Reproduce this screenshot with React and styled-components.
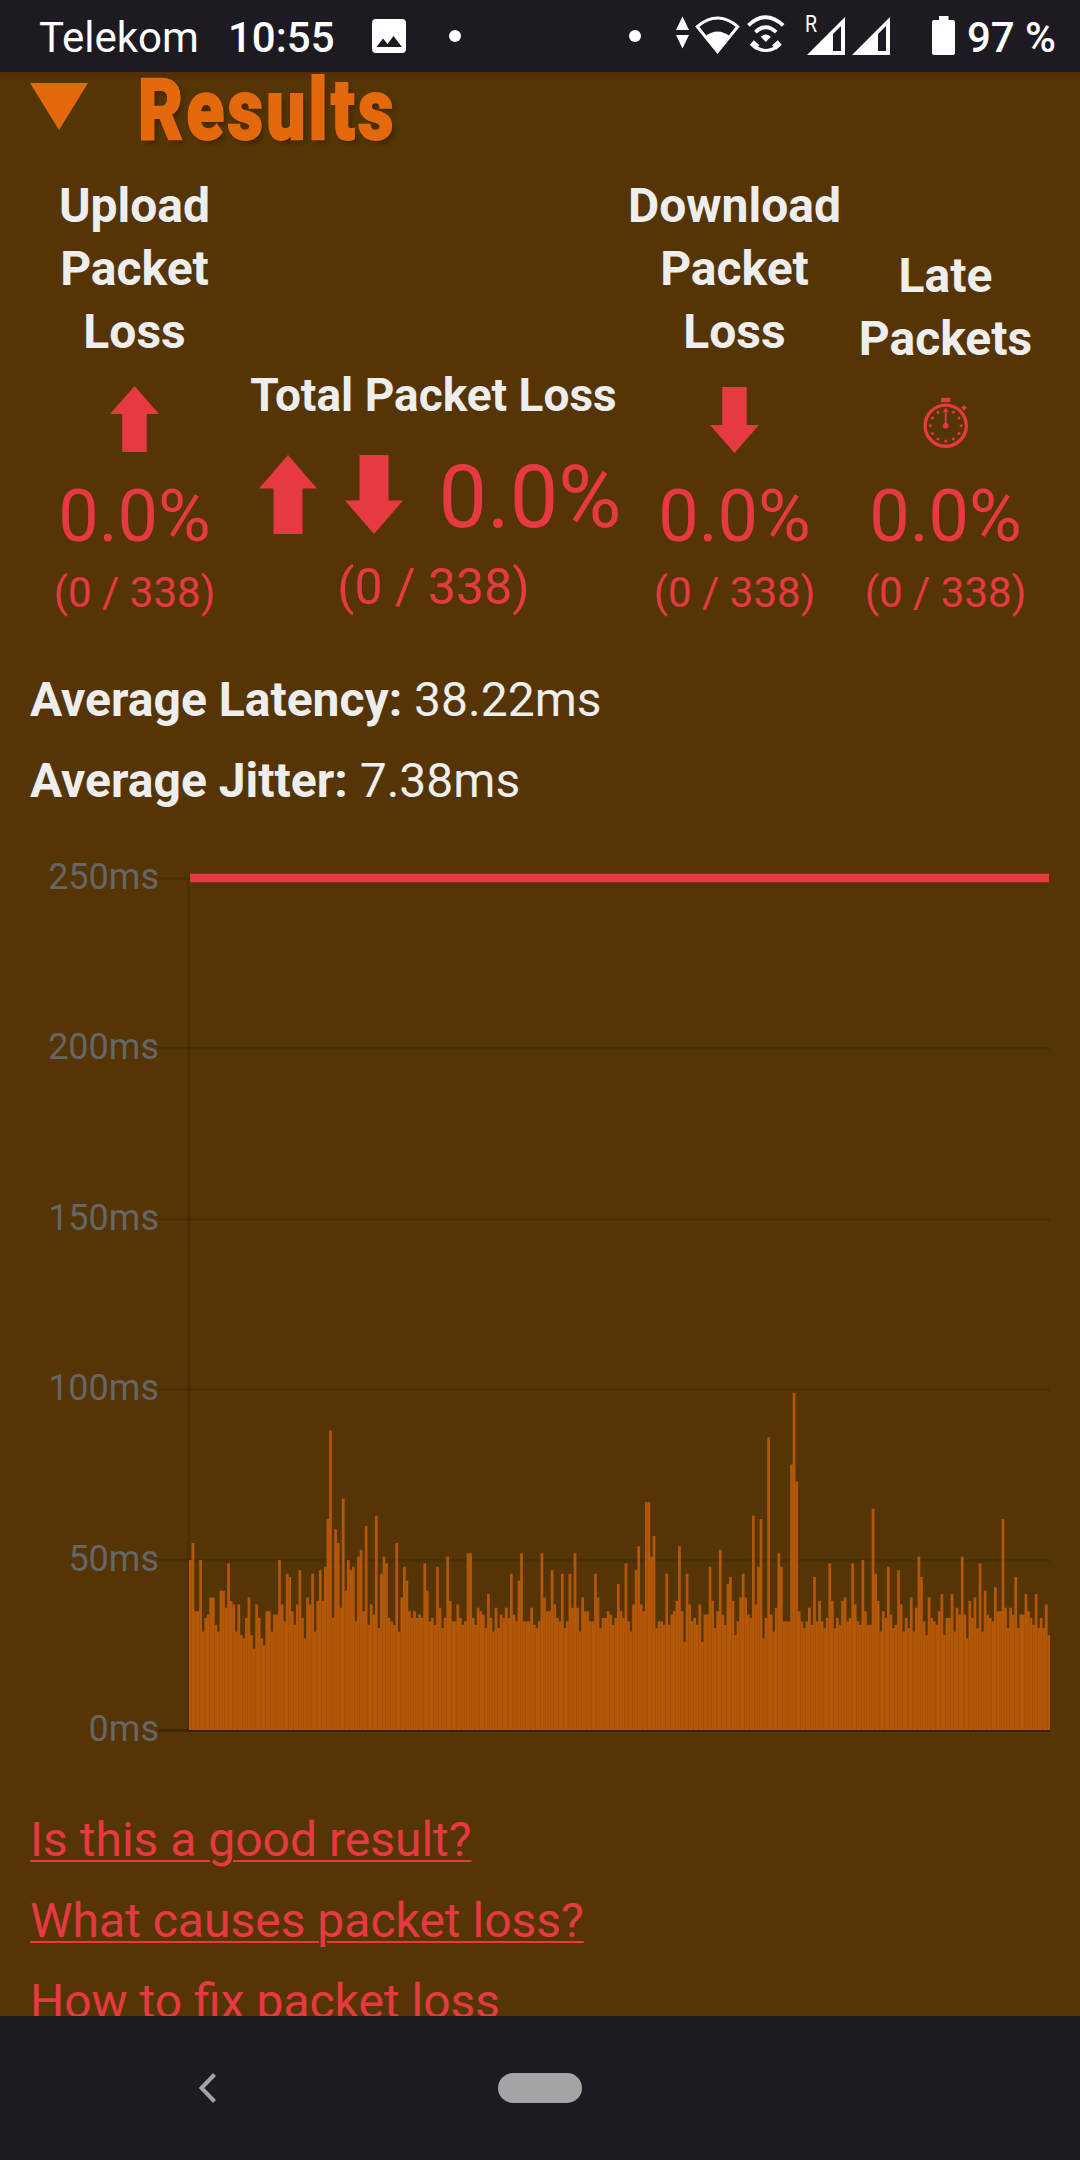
import React from 'react'
import styled, { createGlobalStyle } from 'styled-components'

const GlobalStyle = createGlobalStyle`
  body {
    margin: 0;
    background-color: #553506;
    font-family: Roboto, sans-serif;
  }
`

const Screen = styled.div`
  width: 1080px;
  height: 2160px;
  display: flex;
  flex-direction: column;
  overflow: hidden;
`

const StatusBar = styled.div`
  height: 72px;
  flex: none;
  display: flex;
  justify-content: space-between;
  background-color: #1d1b21;
  color: #fff;
  font-size: 42px;
  line-height: 75px;
`

const StatusLeft = styled.div`
  display: flex;
  padding-left: 39px;
`

const StatusRight = styled.div`
  display: flex;
  padding-right: 24px;
`

const Carrier = styled.span`
  width: 189px;
`

const Clock = styled.span`
  width: 144px;
  font-weight: 500;
`

const Battery = styled.span`
  margin-left: 12px;
  font-weight: 500;
  white-space: nowrap;
`

const Dot = styled.span`
  width: 12px;
  height: 12px;
  margin: 30px 0 0 ${(p) => p.$left || 0}px;
  border-radius: 50%;
  background-color: #fff;
`

const StatusIcon = styled.svg`
  flex: none;
  display: block;
  margin-top: ${(p) => p.$top}px;
  margin-left: ${(p) => p.$left || 0}px;
`

const Roaming = styled.span`
  width: 11px;
  margin: 14px 0 0 20px;
  font-size: 23px;
  line-height: 21px;
  transform: scaleX(0.85);
  transform-origin: left;
`

const Content = styled.main`
  height: 1944px;
  flex: none;
  overflow: hidden;
  color: #eee;
  background: linear-gradient(#512d09, #553506 10px);
`

const Header = styled.div`
  display: flex;
  height: 76px;
  padding-left: 30px;
`

const Triangle = styled.div`
  width: 0;
  height: 0;
  margin-top: 11px;
  border-left: 29.5px solid transparent;
  border-right: 29.5px solid transparent;
  border-top: 47px solid #e4690c;
`

const Title = styled.h2`
  margin: 0 0 0 50px;
  color: #e4690c;
  font-size: 85px;
  font-weight: 900;
  line-height: 76px;
  letter-spacing: 4px;
  -webkit-text-stroke: 2px #e4690c;
  text-shadow: 4px 4px 5px rgba(0, 0, 0, 0.25);
  transform: scaleX(0.815);
  transform-origin: left;
`

const Stats = styled.div`
  display: grid;
  grid-template-columns: 209px 389px 213px 209px;
  align-items: end;
  height: 475px;
  padding-left: 30px;
`

const Stat = styled.div`
  display: flex;
  flex-direction: column;
  align-items: center;
  text-align: center;
  padding-bottom: ${(p) => (p.$total ? 6 : 0)}px;
`

const StatLabel = styled.div`
  font-size: ${(p) => (p.$total ? 46 : 48)}px;
  font-weight: 700;
  line-height: ${(p) => (p.$total ? 60 : 63)}px;
  white-space: pre;
`

const StatIcon = styled.svg`
  display: block;
  margin: ${(p) => p.$margin};
`

const TotalRow = styled.div`
  display: flex;
  align-items: flex-start;
  height: 100px;
  margin: 23px 0 9px;
  padding-left: 14px;
`

const Percent = styled.div`
  color: #e63941;
  font-size: ${(p) => (p.$total ? 86.4 : 72)}px;
  line-height: ${(p) => (p.$total ? 100 : 84)}px;
`

const Count = styled.div`
  color: #e63941;
  font-size: ${(p) => (p.$total ? 50 : 42)}px;
  line-height: 60px;
  margin-top: ${(p) => (p.$total ? 0 : 4)}px;
`

const Averages = styled.div`
  padding: 36px 30px 0;
`

const Average = styled.div`
  font-size: 48px;
  line-height: 81px;
`

const ChartSvg = styled.svg`
  display: block;
`

const AxisLabel = styled.text`
  fill: #666;
  font-size: 36px;
  text-anchor: end;
`

const Links = styled.div`
  display: flex;
  flex-direction: column;
  align-items: flex-start;
  padding-left: 30px;
`

const Link = styled.a`
  color: #e63941;
  font-size: 48px;
  line-height: 81px;
  text-decoration: underline;
  text-decoration-thickness: 2px;
  text-underline-offset: 4px;
`

const NavBar = styled.nav`
  display: flex;
  align-items: center;
  height: 144px;
  flex: none;
  padding-left: 199px;
  background-color: #1d1b21;
`

const HomePill = styled.div`
  width: 84px;
  height: 30px;
  margin-left: 282px;
  border-radius: 15px;
  background-color: #a4a3a6;
`

// latency of every packet, in ms
const latencies = [
  50, 55, 35, 35, 50, 29, 33, 34, 39, 39, 31, 29, 41, 41, 36, 49, 38, 37, 29, 37,
  28, 27, 33, 39, 28, 24, 37, 33, 27, 25, 35, 35, 29, 34, 34, 50, 37, 32, 46, 45,
  35, 31, 37, 47, 33, 27, 39, 37, 46, 29, 38, 47, 38, 48, 62, 88, 33, 59, 55, 36,
  68, 41, 50, 47, 48, 32, 51, 53, 35, 60, 31, 37, 34, 63, 30, 46, 51, 49, 33, 32,
  31, 55, 29, 39, 48, 44, 35, 33, 35, 33, 34, 33, 49, 41, 32, 33, 31, 48, 36, 30,
  33, 51, 38, 32, 32, 37, 33, 31, 32, 52, 52, 33, 31, 36, 35, 34, 30, 40, 33, 29,
  36, 30, 34, 33, 36, 33, 46, 34, 32, 44, 52, 32, 32, 32, 36, 31, 30, 32, 52, 39,
  35, 35, 47, 37, 33, 32, 46, 30, 32, 46, 36, 52, 36, 29, 39, 35, 35, 32, 32, 46,
  39, 30, 33, 33, 35, 34, 31, 33, 43, 35, 33, 49, 32, 29, 37, 47, 54, 37, 35, 67,
  67, 51, 57, 30, 32, 32, 31, 46, 31, 34, 35, 38, 54, 35, 26, 46, 37, 32, 33, 31,
  37, 26, 34, 34, 48, 38, 30, 35, 53, 34, 31, 43, 45, 38, 28, 32, 39, 46, 39, 34,
  33, 63, 37, 48, 62, 27, 33, 86, 34, 29, 36, 52, 48, 32, 32, 32, 78, 99, 73, 35,
  32, 30, 32, 36, 31, 45, 32, 38, 32, 30, 33, 49, 38, 30, 33, 31, 38, 39, 32, 33,
  49, 37, 32, 31, 50, 35, 31, 31, 65, 46, 38, 29, 35, 33, 48, 34, 30, 31, 47, 37,
  29, 33, 30, 39, 29, 36, 51, 45, 32, 28, 39, 33, 32, 31, 35, 40, 28, 33, 33, 40,
  29, 36, 34, 51, 34, 27, 38, 33, 39, 30, 49, 29, 41, 34, 33, 32, 42, 35, 35, 62,
  36, 30, 36, 34, 45, 30, 34, 34, 40, 35, 33, 31, 40, 30, 33, 30, 37, 28,
]

const ticks = [250, 200, 150, 100, 50, 0]

const LEFT = 189
const RIGHT = 1050
const BOTTOM = 909.5
const PX_PER_MS = 3.41

const yOf = (ms) => BOTTOM - ms * PX_PER_MS
const gridY = (ms) => Math.round(56 + (250 - ms) * 3.408)

function LatencyChart() {
  const step = (RIGHT - LEFT) / latencies.length
  return (
    <ChartSvg width="1080" height="978" viewBox="0 0 1080 978">
      {ticks.map((ms) => (
        <g key={ms}>
          <rect
            x={158}
            y={gridY(ms)}
            width={RIGHT - 158}
            height={3}
            fill={ms === 0 ? 'rgba(0,0,0,0.25)' : 'rgba(0,0,0,0.1)'}
          />
          <AxisLabel x={159} y={gridY(ms) + 12}>{ms}ms</AxisLabel>
        </g>
      ))}
      <rect x={187} y={57} width={3} height={855} fill="rgba(0,0,0,0.1)" />
      {/* slight overlap keeps the seams between bars faint */}
      {latencies.map((ms, i) => (
        <rect
          key={i}
          x={LEFT + i * step}
          y={yOf(ms)}
          width={i === latencies.length - 1 ? step : step + 0.2}
          height={ms * PX_PER_MS}
          fill="#b35709"
        />
      ))}
      <rect x={LEFT} y={909} width={RIGHT - LEFT} height={2} fill="#352006" />
      <rect x={190} y={52.7} width={859} height={8.6} fill="#e63941" />
    </ChartSvg>
  )
}

function Arrow({ down, width, height, margin }) {
  return (
    <StatIcon $margin={margin} width={width} height={height} viewBox="0 0 48 66" preserveAspectRatio="none">
      <path
        fill="#e63941"
        d={down ? 'M12 0H36V38H48L24 66L0 38H12Z' : 'M24 0L48 28H36V66H12V28H0Z'}
      />
    </StatIcon>
  )
}

function Stopwatch() {
  const dots = [1, 2, 3, 4, 5, 6, 7, 8, 9, 10, 11]
  return (
    <StatIcon $margin="27px 0 26px" width="46" height="52" viewBox="0 0 46 52">
      <circle cx="22.7" cy="28.7" r="20.6" fill="none" stroke="#e63941" strokeWidth="3.4" />
      <rect x="18.2" y="0.8" width="9" height="4.4" fill="#e63941" />
      <path d="M41 8.4L43.4 11L41 13.2L38.6 11Z" fill="#e63941" stroke="#e63941" />
      <path d="M22.7 28V14" stroke="#e63941" strokeWidth="1.8" />
      <path d="M22.7 10.5L25.6 15H19.8Z" fill="#e63941" />
      <circle cx="22.7" cy="28.7" r="2.8" fill="#e63941" />
      {dots.map((n) => (
        <circle
          key={n}
          cx={22.7 + 15.4 * Math.sin((n * Math.PI) / 6)}
          cy={28.7 - 15.4 * Math.cos((n * Math.PI) / 6)}
          r="1.5"
          fill="#e63941"
        />
      ))}
    </StatIcon>
  )
}

function Signal({ left }) {
  return (
    <StatusIcon $top={17} $left={left} width="38" height="38" viewBox="0 0 38 38" fill="#fff">
      <path fillRule="evenodd" d="M38 0V38H0ZM34 9L26 17V34H34Z" />
    </StatusIcon>
  )
}

export default function App() {
  return (
    <Screen>
      <GlobalStyle />
      <StatusBar>
        <StatusLeft>
          <Carrier>Telekom</Carrier>
          <Clock>10:55</Clock>
          <StatusIcon $top={19} width="34" height="34" viewBox="0 0 34 34">
            <rect width="34" height="34" rx="4" fill="#fff" />
            <path d="M4.5 28L11 19.5L15.5 25L21.5 17L30 28Z" fill="#1d1b21" />
          </StatusIcon>
          <Dot $left={43} />
        </StatusLeft>
        <StatusRight>
          <Dot />
          <StatusIcon $top={16} $left={35} width="13" height="33" viewBox="0 0 13 33" fill="#fff">
            <path d="M6.5 0.5L13 14H0ZM0 19H13L6.5 32.5Z" />
          </StatusIcon>
          <StatusIcon $top={16} $left={6} width="45" height="38" viewBox="0 0 45 38">
            <path d="M2.3 10.6Q22.5 -6.5 42.7 10.6L22.5 35.6Z" fill="none" stroke="#fff" strokeWidth="3" />
            <path d="M10.5 20Q22.5 11 34.5 20L22.5 37.5Z" fill="#fff" />
          </StatusIcon>
          <StatusIcon $top={15} $left={7} width="38" height="38" viewBox="0 0 38 38" fill="none" stroke="#fff">
            <path d="M1.4 10.4Q18.8 -6 36.2 10.4" strokeWidth="3.8" />
            <path d="M8.4 17.2Q18.8 7.2 29.2 17.2" strokeWidth="3.8" />
            <path d="M13.8 21.8Q18.8 17.4 23.8 21.8L18.8 27Z" fill="#fff" stroke="none" />
            <path d="M5 29.5Q18.8 41.5 32.6 29.5" strokeWidth="3" />
            <path d="M4.8 27.5L10.5 32.5M32.8 27.5L27.1 32.5" strokeWidth="6" />
          </StatusIcon>
          <Roaming>R</Roaming>
          <Signal left={-9} />
          <Signal left={7} />
          <StatusIcon $top={16} $left={42} width="23" height="39" viewBox="0 0 23 39" fill="#fff">
            <path d="M7 0H16.5V4H21Q23 4 23 6V37Q23 39 21 39H2Q0 39 0 37V6Q0 4 2 4H7Z" />
          </StatusIcon>
          <Battery>97 %</Battery>
        </StatusRight>
      </StatusBar>

      <Content>
        <Header>
          <Triangle />
          <Title>Results</Title>
        </Header>

        <Stats>
          <Stat>
            <StatLabel>{'Upload\nPacket\nLoss'}</StatLabel>
            <Arrow width={49} height={66} margin="23px 0 23px" />
            <Percent>0.0%</Percent>
            <Count>(0 / 338)</Count>
          </Stat>
          <Stat $total>
            <StatLabel $total>Total Packet Loss</StatLabel>
            <TotalRow>
              <Arrow width={58} height={79} margin="7px 28px 0 0" />
              <Arrow down width={58} height={79} margin="7px 35px 0 0" />
              <Percent $total>0.0%</Percent>
            </TotalRow>
            <Count $total>(0 / 338)</Count>
          </Stat>
          <Stat>
            <StatLabel>{'Download\nPacket\nLoss'}</StatLabel>
            <Arrow down width={49} height={66} margin="24px 0 22px" />
            <Percent>0.0%</Percent>
            <Count>(0 / 338)</Count>
          </Stat>
          <Stat>
            <StatLabel>{'Late\nPackets'}</StatLabel>
            <Stopwatch />
            <Percent>0.0%</Percent>
            <Count>(0 / 338)</Count>
          </Stat>
        </Stats>

        <Averages>
          <Average><b>Average Latency:</b> 38.22ms</Average>
          <Average><b>Average Jitter:</b> 7.38ms</Average>
        </Averages>

        <LatencyChart />

        <Links>
          <Link>Is this a good result?</Link>
          <Link>What causes packet loss?</Link>
          <Link>How to fix packet loss</Link>
        </Links>
      </Content>

      <NavBar>
        <svg width="17" height="30" viewBox="0 0 17 30">
          <path d="M15.5 1.5L2.5 15L15.5 28.5" fill="none" stroke="#a4a3a6" strokeWidth="4" />
        </svg>
        <HomePill />
      </NavBar>
    </Screen>
  )
}
